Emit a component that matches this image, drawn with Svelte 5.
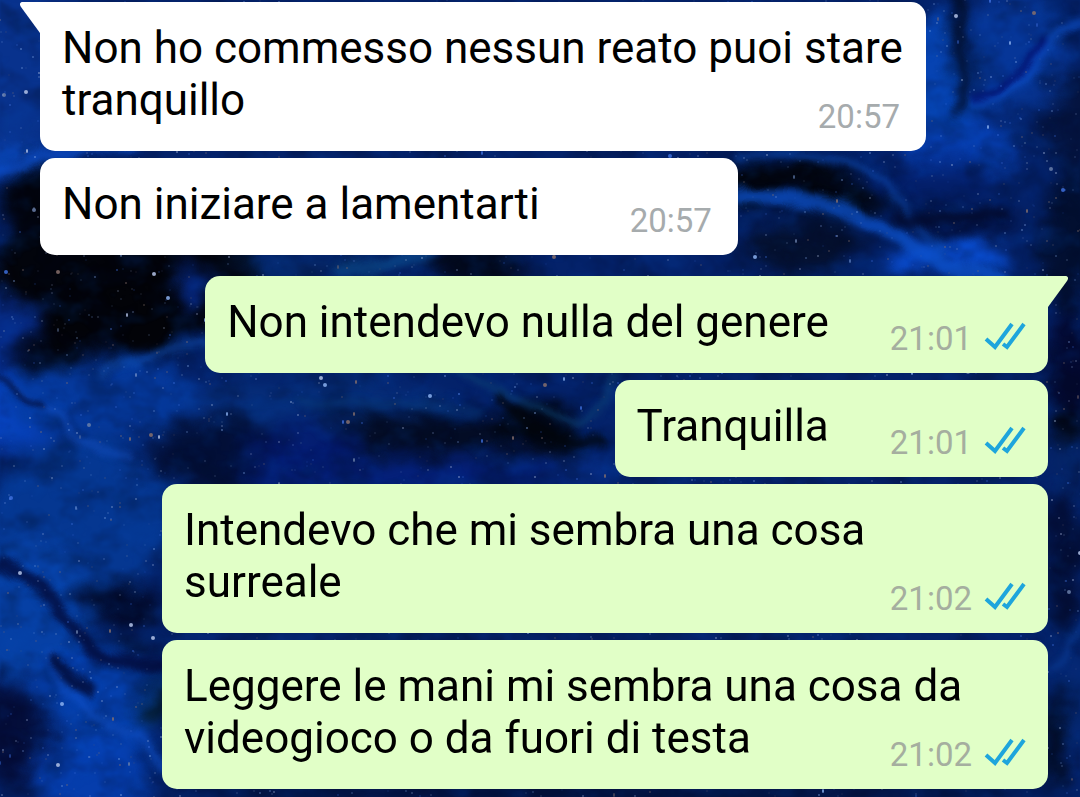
<script>
  const messages = [
    { text: 'Non ho commesso nessun reato puoi stare tranquillo', time: '20:57', out: false },
    { text: 'Non iniziare a lamentarti', time: '20:57', out: false },
    { text: 'Non intendevo nulla del genere', time: '21:01', out: true },
    { text: 'Tranquilla', time: '21:01', out: true },
    { text: 'Intendevo che mi sembra una cosa surreale', time: '21:02', out: true },
    { text: 'Leggere le mani mi sembra una cosa da videogioco o da fuori di testa', time: '21:02', out: true }
  ];

  // first message of a run gets the tail
  const isFirst = (i) => i === 0 || messages[i - 1].out !== messages[i].out;

  // cx, cy, rx, ry, fill, opacity
  const clouds = [
    [20, 60, 60, 90, '#0a3796', 0.8],
    [10, 160, 55, 14, '#0b4cc4', 0.8],
    [120, 280, 130, 75, '#020308', 1],
    [60, 225, 60, 60, '#02040c', 1],
    [0, 330, 36, 40, '#083093', 0.8],
    [45, 355, 28, 14, '#020207', 0.9],
    [10, 410, 60, 40, '#0846c8', 0.9],
    [110, 400, 110, 40, '#063ba0', 0.9],
    [80, 520, 95, 80, '#063a96', 0.9],
    [215, 450, 60, 40, '#030b2a', 0.8],
    [195, 285, 20, 26, '#06309a', 0.8],
    [330, 265, 110, 10, '#06306c', 0.6],
    [480, 262, 60, 18, '#02050f', 0.9],
    [320, 400, 130, 22, '#06307c', 0.8],
    [430, 436, 120, 22, '#030c24', 1],
    [300, 445, 60, 18, '#041c78', 0.8],
    [400, 474, 170, 14, '#041f80', 0.8],
    [540, 430, 40, 30, '#02050e', 0.9],
    [585, 470, 30, 18, '#06308c', 0.8],
    [30, 610, 70, 70, '#0748b4', 0.8],
    [120, 605, 45, 18, '#02061f', 0.9],
    [125, 650, 40, 12, '#020618', 0.8],
    [95, 700, 65, 60, '#0642b4', 0.9],
    [15, 735, 40, 50, '#040b34', 0.9],
    [90, 775, 60, 40, '#0640b4', 0.9],
    [155, 700, 16, 24, '#04161c', 0.8],
    [940, 80, 35, 70, '#084cc4', 0.8],
    [1010, 55, 60, 60, '#083ca4', 0.8],
    [962, 30, 10, 60, '#031031', 0.8],
    [1075, 120, 30, 50, '#04133c', 0.9],
    [960, 150, 60, 24, '#0748c8', 0.8],
    [780, 182, 95, 20, '#02050d', 1],
    [850, 200, 45, 14, '#020710', 0.9],
    [930, 180, 65, 24, '#041c68', 0.6],
    [800, 245, 65, 28, '#041130', 1],
    [960, 222, 60, 14, '#030e38', 0.8],
    [1070, 240, 30, 70, '#020d2a', 0.9],
    [950, 258, 60, 18, '#0a50d8', 0.9],
    [1070, 370, 25, 60, '#030930', 1],
    [1070, 460, 22, 40, '#052466', 0.8],
    [1068, 425, 18, 18, '#02050c', 0.9],
    [1065, 560, 20, 70, '#030d34', 0.9],
    [1072, 700, 22, 50, '#052a78', 0.8],
    [1055, 740, 10, 50, '#02060f', 0.9],
    [600, 794, 450, 8, '#030a26', 0.9]
  ];

  // d, stroke, width, opacity
  const veins = [
    ['M-5 172 C30 170 35 150 60 152 S90 140 130 148', '#0d52d4', 12, 0.6],
    ['M738 197 C805 192 850 210 895 235 S935 265 1000 280', '#0c50c8', 15, 0.75],
    ['M738 158 C790 150 850 154 880 180 S910 220 940 250', '#0c49b0', 7, 0.6],
    ['M975 100 C1010 100 1030 75 1045 50 S1070 25 1085 20', '#0e55d4', 9, 0.6],
    ['M975 97 C1010 92 1025 70 1045 40', '#020a66', 6, 0.9],
    ['M960 -5 C955 40 970 90 958 110', '#020c24', 12, 0.6],
    ['M900 215 C930 225 960 220 1000 212', '#020a2c', 10, 0.8],
    ['M-5 375 C20 385 20 400 40 408 S60 410 66 425 S90 450 130 455', '#1452c8', 6, 0.6],
    ['M-5 372 C12 384 18 402 42 408', '#02082c', 5, 0.9],
    ['M100 372 C150 362 160 345 205 342', '#1050b4', 7, 0.6],
    ['M0 565 C30 575 55 600 80 635 S110 660 165 665', '#020a3a', 13, 0.8],
    ['M50 655 C65 700 90 715 120 728 S145 740 162 770', '#0f50c8', 9, 0.6],
    ['M55 660 C70 680 80 685 90 690', '#02082e', 12, 0.8],
    ['M340 270 C380 270 400 258 430 253', '#0b4e90', 12, 0.6],
    ['M450 370 C510 390 530 410 570 420 S600 385 620 375', '#0b4276', 7, 0.6],
    ['M500 400 C530 430 560 450 600 440', '#020409', 12, 0.7],
    ['M300 400 C340 410 400 395 480 412', '#083a78', 7, 0.5],
    ['M1050 670 C1075 660 1070 630 1085 615', '#0c44a4', 6, 0.5]
  ];

  // fixed seed so the sky is the same on every load
  let seed = 23;
  function rand() {
    seed = (seed * 16807) % 2147483647;
    return seed / 2147483647;
  }

  const stars = Array.from({ length: 4200 }, () => {
    const x = Math.round(rand() * 1080);
    const y = Math.round(rand() * 797);
    const bright = rand();
    return {
      x,
      y,
      rx: bright > 0.985 ? 2 : 1,
      ry: bright > 0.95 ? 2 : 1,
      fill: ['#8bb0ef', '#6a7fa8', '#b4c3e6', '#87706c', '#3d6edb'][Math.floor(rand() * 5)],
      opacity: bright > 0.96 ? 0.85 : 0.1 + bright * bright * 0.45
    };
  });
</script>

<svg class="sky" viewBox="0 0 1080 797" preserveAspectRatio="xMidYMid slice" aria-hidden="true">
  <defs>
    <filter id="cloud" x="-10%" y="-10%" width="120%" height="120%" color-interpolation-filters="sRGB">
      <feGaussianBlur stdDeviation="9" result="soft" />
      <feTurbulence type="fractalNoise" baseFrequency="0.018 0.024" numOctaves="3" seed="8" />
      <feDisplacementMap in="soft" scale="36" xChannelSelector="R" yChannelSelector="G" />
    </filter>
    <filter id="vein" x="-10%" y="-10%" width="120%" height="120%" color-interpolation-filters="sRGB">
      <feGaussianBlur stdDeviation="3" result="soft" />
      <feTurbulence type="fractalNoise" baseFrequency="0.03" numOctaves="2" seed="4" />
      <feDisplacementMap in="soft" scale="14" xChannelSelector="R" yChannelSelector="G" />
    </filter>
    <filter id="dark" x="0" y="0" width="100%" height="100%" color-interpolation-filters="sRGB">
      <feTurbulence type="fractalNoise" baseFrequency="0.025 0.035" numOctaves="4" seed="12" />
      <feColorMatrix values="0 0 0 0 0.005  0 0 0 0 0.03  0 0 0 0 0.12  3 0 0 0 -1.3" />
      <feGaussianBlur stdDeviation="1" />
    </filter>
    <filter id="light" x="0" y="0" width="100%" height="100%" color-interpolation-filters="sRGB">
      <feTurbulence type="fractalNoise" baseFrequency="0.03 0.04" numOctaves="4" seed="31" />
      <feColorMatrix values="0 0 0 0 0.03  0 0 0 0 0.29  0 0 0 0 0.7  0 3 0 0 -1.5" />
      <feGaussianBlur stdDeviation="1" />
    </filter>
  </defs>
  <rect width="1080" height="797" fill="#04226a" />
  <g filter="url(#cloud)">
    {#each clouds as [cx, cy, rx, ry, fill, opacity]}
      <ellipse {cx} {cy} {rx} {ry} {fill} {opacity} />
    {/each}
  </g>
  <rect width="1080" height="797" filter="url(#dark)" opacity="0.3" />
  <rect width="1080" height="797" filter="url(#light)" opacity="0.18" />
  <g filter="url(#vein)" fill="none" stroke-linecap="round">
    {#each veins as [d, stroke, width, opacity]}
      <path {d} {stroke} stroke-width={width} {opacity} />
    {/each}
  </g>
  {#each stars as s}
    <ellipse cx={s.x} cy={s.y} rx={s.rx} ry={s.ry} fill={s.fill} opacity={s.opacity} />
  {/each}
</svg>

<main class="chat">
  {#each messages as message, i}
    <article class="bubble" class:out={message.out} class:first={isFirst(i)}>
      {#if isFirst(i)}
        <svg class="tail" viewBox="0 0 34 31" aria-hidden="true">
          <path d="M34 0H3C0 0 -1 2 1 5L20 31H34Z" />
        </svg>
      {/if}
      <p>
        {message.text}
        <span class="meta">
          <time>{message.time}</time>
          {#if message.out}
            <svg class="ticks" viewBox="0 0 42 28" role="img" aria-label="Letto">
              <path d="M2 17L11 25L28 2M19 22L23 25L40 2" />
            </svg>
          {/if}
        </span>
      </p>
    </article>
  {/each}
</main>

<style>
  :global(body) {
    margin: 0;
    background: #04164c;
  }

  .sky {
    position: fixed;
    inset: 0;
    width: 100%;
    height: 100%;
    z-index: -1;
  }

  .chat {
    display: flex;
    flex-direction: column;
    align-items: flex-start;
    gap: 7px;
    padding: 2px 32px 8px 40px;
    font-family: Roboto, 'Liberation Sans', sans-serif;
  }

  .bubble {
    position: relative;
    box-sizing: border-box;
    max-width: calc(100% - 122px);
    padding: 20px 22px 14px;
    border-radius: 15px;
    background: #fff;
    color: #000;
  }

  .bubble.first {
    border-top-left-radius: 0;
  }

  .bubble.out {
    align-self: flex-end;
    background: #e1ffc7;
  }

  .bubble.out.first {
    margin-top: 14px;
    border-radius: 15px 0 15px 15px;
  }

  p {
    margin: 0;
    font-size: 44px;
    line-height: 52px;
  }

  /* floats to the end of the last line and hangs a little below it */
  .meta {
    float: right;
    display: flex;
    align-items: center;
    gap: 12px;
    margin: 23px 4px 0 90px;
    font-size: 33px;
    line-height: 40px;
    color: #a6abad;
  }

  .out .meta {
    margin: 23px 0 0 61px;
    color: #a5ae9f;
  }

  .tail {
    position: absolute;
    top: 0;
    left: -20px;
    width: 34px;
    height: 31px;
    fill: #fff;
  }

  .out .tail {
    left: auto;
    right: -20px;
    fill: #e1ffc7;
    transform: scaleX(-1);
  }

  .ticks {
    width: 42px;
    height: 28px;
    margin-bottom: 6px;
    fill: none;
    stroke: #1ea5dc;
    stroke-width: 4;
  }
</style>
